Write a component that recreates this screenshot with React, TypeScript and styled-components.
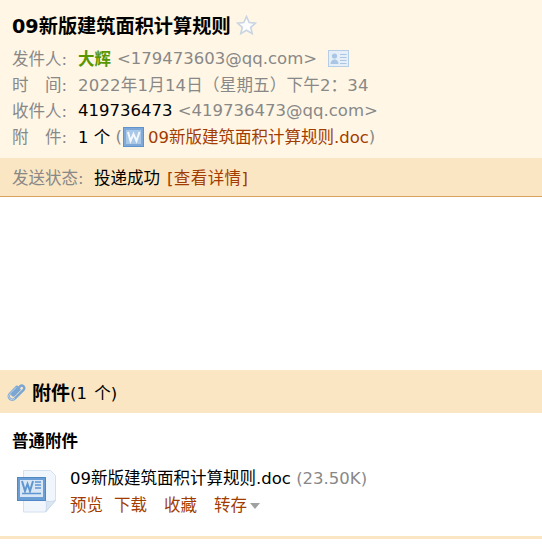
import styled, { createGlobalStyle } from 'styled-components';

const FONT = '"DejaVu Sans", "Noto Sans CJK SC", sans-serif';

const GlobalStyle = createGlobalStyle`
	html, body {
		margin: 0;
		padding: 0;
		background: #fff;
	}
	body {
		font-family: ${FONT};
		font-size: 16.5px;
		overflow: hidden;
	}
`;

const Page = styled.div`
	width: 542px;
	height: 555px;
	display: flex;
	flex-direction: column;
`;

const Header = styled.header`
	height: 158px;
	box-sizing: border-box;
	padding: 10px 12px 0;
	background: #fff6e5;
`;

const Title = styled.h1`
	display: flex;
	align-items: center;
	gap: 5px;
	margin: 0 0 5px;
	height: 30px;
	font-size: 19.2px;
	font-weight: bold;
	color: #000;
`;

const Row = styled.div`
	display: flex;
	align-items: center;
	height: 26px;
	white-space: nowrap;
	color: #000;
`;

const Label = styled.span`
	width: 66px;
	flex: none;
	color: #888;
`;

const Muted = styled.span`
	color: #888;
`;

const DateText = styled(Muted)`
	letter-spacing: 0.2px;
`;

const Sender = styled.b`
	color: #5a9600;
	margin-right: 6px;
`;

const FileLink = styled.span`
	color: #a33c00;
`;

const CardIcon = styled.svg`
	margin-left: 11px;
`;

const InlineDoc = styled.svg`
	margin: 2px 4px 0 1px;
`;

const StatusBar = styled.div`
	height: 39px;
	box-sizing: border-box;
	display: flex;
	align-items: center;
	padding: 0 12px 1px;
	background: #fae6c3;
	border-bottom: 1px solid #d9a05e;
	white-space: nowrap;
`;

const StatusLabel = styled.span`
	width: 82px;
	flex: none;
	color: #888;
`;

const StatusText = styled.span`
	color: #000;
	margin-right: 7px;
`;

const Details = styled.span`
	color: #a33c00;
	letter-spacing: 0.4px;
`;

const Blank = styled.div`
	height: 173px;
	flex: none;
`;

const AttachHeader = styled.div`
	height: 43px;
	display: flex;
	align-items: center;
	padding-left: 7px;
	background: #fae6c3;
	white-space: nowrap;
`;

const AttachTitle = styled.b`
	margin-left: 6px;
	font-size: 19px;
`;

const AttachCount = styled.span`
	word-spacing: 2px;
`;

const AttachBody = styled.section`
	height: 126px;
	box-sizing: border-box;
	padding: 18px 12px 0;
	border-bottom: 3px solid #fae6c3;
`;

const SectionName = styled.div`
	font-size: 16.5px;
	font-weight: bold;
	height: 22px;
	line-height: 22px;
`;

const FileRow = styled.div`
	display: flex;
	gap: 13px;
	margin: 17px 0 0 5px;
`;

const FileLines = styled.div`
	display: flex;
	flex-direction: column;
	gap: 1px;
	margin-top: -3px;
`;

const FileName = styled.div`
	height: 24px;
	line-height: 24px;
	white-space: nowrap;
`;

const Actions = styled.div`
	display: flex;
	align-items: center;
	height: 24px;
	gap: 11px;
	color: #a33c00;
`;

const Gap = styled.span`
	margin-left: 6px;
`;

const Caret = styled.i`
	display: inline-block;
	margin-left: 3px;
	vertical-align: 2px;
	border-style: solid;
	border-width: 6px 5px 0;
	border-color: #a0a0a0 transparent transparent;
`;

function Star() {
	return (
		<svg width="21" height="21" viewBox="0 0 21 21">
			<path
				d="M10.5 1.5l2.7 6 6.3.6-4.8 4.2 1.5 6.4-5.7-3.4-5.7 3.4 1.5-6.4L1.5 8.1l6.3-.6z"
				fill="#fdfdfd"
				stroke="#c9d5e2"
				strokeWidth="1.6"
			/>
		</svg>
	);
}

function Card() {
	return (
		<CardIcon width="21" height="17" viewBox="0 0 21 17">
			<rect x="0.5" y="0.5" width="20" height="16" fill="#e6eff8" stroke="#b5cde6" />
			<circle cx="6.5" cy="6" r="2.6" fill="#a9c6e4" />
			<path d="M2.5 14c0-3 2-4.5 4-4.5s4 1.5 4 4.5z" fill="#a9c6e4" />
			<path d="M12 4.5h6.5M12 7.5h6.5M12 10.5h6.5M12 13.5h6.5" stroke="#a9c6e4" />
		</CardIcon>
	);
}

function DocSmall() {
	return (
		<InlineDoc width="21" height="20" viewBox="0 0 21 20">
			<rect x="0.5" y="0.5" width="20" height="19" fill="#7fa9d8" stroke="#5f93cc" />
			<rect x="3" y="3" width="15" height="14" fill="#a9c8e8" />
			<path d="M5 5l2.5 9 3-7 3 7 3-9" fill="none" stroke="#f4f8fc" strokeWidth="2" />
		</InlineDoc>
	);
}

function DocLarge() {
	return (
		<svg width="40" height="43" viewBox="0 0 40 43" style={{ flex: 'none' }}>
			<path d="M6.5.5h27l5 5v25l-10 11.5h-22z" fill="#f1f6fd" stroke="#d3e0f0" />
			<path d="M28.5 42c1.5-4 1-8 .5-11 3 1 6 .5 9.5-.5z" fill="#dbe6f3" stroke="#cbdaec" />
			<rect x="0.5" y="7.5" width="28" height="23" fill="#6a9ed4" stroke="#4f88c4" />
			<rect x="3" y="10" width="23" height="17" fill="#d8e6f5" />
			<path d="M5 11l3 10 2.5-7 2.5 7 3-10" fill="none" stroke="#5f96cf" strokeWidth="2" />
			<path d="M18 12h6M18 15h6M18 18h6M5 23.5h19" stroke="#5f96cf" strokeWidth="1.5" />
		</svg>
	);
}

function Clip() {
	return (
		<svg width="19" height="20" viewBox="0 0 19 20">
			<g transform="rotate(45 9.5 10)" fill="none" strokeLinecap="round">
				<path
					d="M6 6v10a3.5 3.5 0 0 0 7 0V3.5a2.5 2.5 0 0 0-5 0V14a1 1 0 0 0 2 0V6"
					stroke="#7ba6d4"
					strokeWidth="2.4"
				/>
				<path d="M6 7v9a3.5 3.5 0 0 0 7 0" stroke="#c8dcf0" strokeWidth="0.8" />
			</g>
		</svg>
	);
}

export default function App() {
	return (
		<>
			<GlobalStyle />
			<Page>
				<Header>
					<Title>
						09新版建筑面积计算规则
						<Star />
					</Title>
					<Row>
						<Label>发件人:</Label>
						<Sender>大辉</Sender>
						<Muted>&lt;179473603@qq.com&gt;</Muted>
						<Card />
					</Row>
					<Row>
						<Label>时　间:</Label>
						<DateText>2022年1月14日（星期五）下午2：34</DateText>
					</Row>
					<Row>
						<Label>收件人:</Label>
						<span>419736473&nbsp;</span>
						<Muted>&lt;419736473@qq.com&gt;</Muted>
					</Row>
					<Row>
						<Label>附　件:</Label>
						<span>1 个&nbsp;</span>
						<Muted>(</Muted>
						<DocSmall />
						<FileLink>09新版建筑面积计算规则.doc</FileLink>
						<Muted>)</Muted>
					</Row>
				</Header>
				<StatusBar>
					<StatusLabel>发送状态:</StatusLabel>
					<StatusText>投递成功</StatusText>
					<Details>[查看详情]</Details>
				</StatusBar>
				<Blank />
				<AttachHeader>
					<Clip />
					<AttachTitle>附件</AttachTitle>
					<AttachCount>(1 个)</AttachCount>
				</AttachHeader>
				<AttachBody>
					<SectionName>普通附件</SectionName>
					<FileRow>
						<DocLarge />
						<FileLines>
							<FileName>
								09新版建筑面积计算规则.doc <Muted>(23.50K)</Muted>
							</FileName>
							<Actions>
								<span>预览</span>
								<span>下载</span>
								<Gap>收藏</Gap>
								<Gap>
									转存
									<Caret />
								</Gap>
							</Actions>
						</FileLines>
					</FileRow>
				</AttachBody>
			</Page>
		</>
	);
}
